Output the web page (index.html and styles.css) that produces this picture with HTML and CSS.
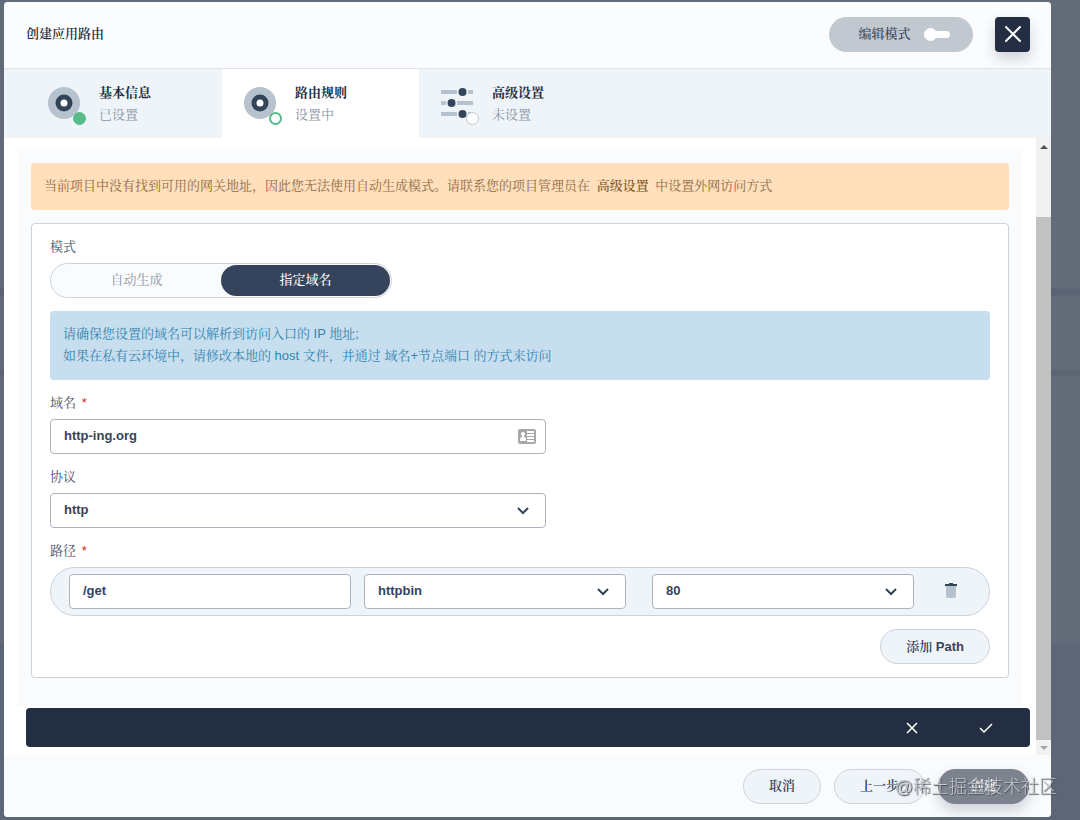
FILE: index.html
```html
<!DOCTYPE html>
<html lang="zh-CN">
<head>
  <meta charset="UTF-8">
  <title>创建应用路由</title>
  <link rel="stylesheet" href="styles.css">
</head>
<body>
  <div class="modal">
    <header class="modal-header">
      <h2>创建应用路由</h2>
      <button class="mode-switch">编辑模式
        <span class="toggle"></span>
      </button>
      <button class="btn-close" aria-label="关闭">
        <svg width="18" height="18" viewBox="0 0 18 18"><path d="M2 2l14 14M16 2L2 16" stroke="#fff" stroke-width="2" stroke-linecap="round"/></svg>
      </button>
    </header>

    <nav class="steps">
      <div class="step">
        <div class="step-icon">
          <svg width="33" height="33" viewBox="0 0 33 33"><circle cx="16" cy="16" r="16" fill="#b6c2cd"/><circle cx="16" cy="16" r="6" fill="#fff" stroke="#324558" stroke-width="5"/></svg>
          <span class="dot done"></span>
        </div>
        <div>
          <div class="step-title">基本信息</div>
          <div class="step-state">已设置</div>
        </div>
      </div>
      <div class="step active">
        <div class="step-icon">
          <svg width="33" height="33" viewBox="0 0 33 33"><circle cx="16" cy="16" r="16" fill="#b6c2cd"/><circle cx="16" cy="16" r="6" fill="#fff" stroke="#324558" stroke-width="5"/></svg>
          <span class="dot doing"></span>
        </div>
        <div>
          <div class="step-title">路由规则</div>
          <div class="step-state">设置中</div>
        </div>
      </div>
      <div class="step">
        <div class="step-icon">
          <svg width="33" height="33" viewBox="0 0 33 33"><path d="M0 5h16M27 5h5M0 16h5M16 16h16M0 27h16M27 27h5" stroke="#b6c2cd" stroke-width="4"/><g fill="#324558"><circle cx="21.500" cy="5" r="4"/><circle cx="10.500" cy="16" r="4"/><circle cx="21.500" cy="27" r="4"/></g></svg>
          <span class="dot"></span>
        </div>
        <div>
          <div class="step-title">高级设置</div>
          <div class="step-state">未设置</div>
        </div>
      </div>
    </nav>

    <div class="modal-body">
      <div class="scroll-content">
        <div class="panel">
          <div class="alert warning">当前项目中没有找到可用的网关地址，因此您无法使用自动生成模式。请联系您的项目管理员在 <b>高级设置</b> 中设置外网访问方式</div>

          <form class="card">
            <div class="label">模式</div>
            <div class="tabs">
              <button type="button" class="tab">自动生成</button>
              <button type="button" class="tab on">指定域名</button>
            </div>

            <div class="alert info">请确保您设置的域名可以解析到访问入口的 IP 地址;<br>如果在私有云环境中，请修改本地的 host 文件，并通过 域名+节点端口 的方式来访问</div>

            <label class="label" for="host">域名 <i>*</i></label>
            <div class="control half">
              <input type="text" id="host" value="http-ing.org">
              <svg class="card-icon" width="18" height="15" viewBox="0 0 18 15"><rect width="18" height="15" rx="2" fill="#a6a7a8"/><g fill="#fff"><circle cx="5" cy="5" r="2"/><path d="M4 6h2v2c1 0 2 1 2 2v2H2v-2c0-1 1-2 2-2z"/><path d="M9 2h7v2H9zM9 5h7v2H9zM9 8h7v2H9zM9 11h7v2H9z"/></g></svg>
            </div>

            <label class="label" for="protocol">协议</label>
            <div class="control half">
              <select id="protocol"><option>http</option><option>https</option></select>
              <svg class="arrow" width="12" height="8" viewBox="0 0 12 8"><path d="M1 1l5 5 5-5"/></svg>
            </div>

            <label class="label" for="path">路径 <i>*</i></label>
            <div class="path-row">
              <div class="control path">
                <input type="text" id="path" value="/get">
              </div>
              <div class="control service">
                <select aria-label="服务"><option>httpbin</option></select>
                <svg class="arrow" width="12" height="8" viewBox="0 0 12 8"><path d="M1 1l5 5 5-5"/></svg>
              </div>
              <div class="control port">
                <select aria-label="端口"><option>80</option></select>
                <svg class="arrow" width="12" height="8" viewBox="0 0 12 8"><path d="M1 1l5 5 5-5"/></svg>
              </div>
              <button type="button" class="btn-delete" aria-label="删除">
                <svg width="12" height="16" viewBox="0 0 12 16"><path d="M1 3h10v10q0 2-2 2H3q-2 0-2-2z" fill="#b6c2cd"/><path d="M0 1h4V0h4v1h4v2H0z" fill="#324558"/></svg>
              </button>
            </div>
            <div class="add-row">
              <button type="button" class="btn">添加 Path</button>
            </div>
          </form>
        </div>

        <div class="confirm-bar">
          <button aria-label="放弃"><svg width="12" height="12" viewBox="0 0 12 12"><path d="M1 1l10 10M11 1L1 11"/></svg></button>
          <button aria-label="确认"><svg width="14" height="12" viewBox="0 0 14 12"><path d="M1 6l4 4 8-8"/></svg></button>
        </div>
      </div>
      <div class="scrollbar">
        <span class="up"></span>
        <span class="thumb"></span>
        <span class="down"></span>
      </div>
    </div>

    <footer class="modal-footer">
      <button class="btn cancel">取消</button>
      <button class="btn prev">上一步</button>
      <button class="btn create">创建</button>
    </footer>
  </div>
  <div class="watermark">@稀土掘金技术社区</div>
</body>
</html>
```
FILE: styles.css
```css
* {
  box-sizing: border-box;
}
body {
  margin: 0;
  min-height: 100vh;
  padding: 2px 29px 3px 4px;
  display: flex;
  background: linear-gradient(#636b79 286px, #5b6373 290px, #5b6373 294px, #636b79 298px, #636b79 368px, #5b6373 373px, #636b79 378px, #636b79 640px, #5d6676 646px);
  font-family: "Liberation Sans", "Noto Serif CJK SC", "Noto Sans CJK SC", sans-serif;
  font-size: 13px;
  line-height: 22px;
  color: #36435c;
}
button, input, select {
  font: inherit;
  color: inherit;
  margin: 0;
}
button {
  border: none;
  padding: 0;
  cursor: pointer;
}
svg {
  display: block;
  fill: none;
}
.modal {
  flex: 1;
  display: flex;
  flex-direction: column;
  background-color: #fff;
  border-radius: 4px;
  overflow: hidden;
}
.modal-header {
  height: 67px;
  padding: 0 21px 2px 22px;
  display: flex;
  align-items: center;
  background-color: #fbfcfd;
  border-bottom: 1px solid #dfe4ea;
}
.modal-header h2 {
  margin: 0;
  flex: 1;
  font-size: 13px;
  font-weight: 600;
  color: #242e42;
}
.mode-switch {
  width: 144px;
  height: 35px;
  margin-right: 22px;
  padding-left: 6px;
  display: flex;
  align-items: center;
  justify-content: center;
  gap: 13px;
  border-radius: 18px;
  background-color: #c1c8d0;
  font-weight: 500;
}
.toggle {
  width: 26px;
  height: 7px;
  border-radius: 4px;
  background-color: #fff;
  position: relative;
}
.toggle::before {
  content: "";
  position: absolute;
  left: 0;
  top: -3px;
  width: 13px;
  height: 13px;
  border-radius: 50%;
  background-color: #fff;
}
.btn-close {
  width: 35px;
  height: 35px;
  display: flex;
  align-items: center;
  justify-content: center;
  border-radius: 4px;
  background-color: #242e42;
  box-shadow: 0 7px 14px rgba(36, 46, 66, 0.2);
}

/* 步骤 */
.steps {
  height: 69px;
  padding-left: 22px;
  display: flex;
  background-color: #eff4f9;
}
.step {
  width: 197px;
  padding-left: 22px;
  display: flex;
  align-items: center;
  gap: 18px;
}
.step:first-child {
  width: 196px;
}
.step.active {
  background-color: #fff;
}
.step-icon {
  position: relative;
}
.dot {
  position: absolute;
  right: -5px;
  bottom: -5px;
  width: 13px;
  height: 13px;
  border: 1px solid #c1c8d0;
  border-radius: 50%;
  background-color: #fff;
}
.dot.done {
  border-color: #55bc8a;
  background-color: #55bc8a;
}
.dot.doing {
  border: 2px solid #55bc8a;
}
.step-title {
  font-weight: bold;
  color: #242e42;
}
.step-state {
  color: #8b94a3;
}

/* 内容 */
.modal-body {
  flex: 1;
  display: flex;
}
.scroll-content {
  flex: 1;
  padding: 11px 6px 8px 13px;
  display: flex;
  flex-direction: column;
}
.panel {
  flex: 1;
  margin-right: 7px;
  padding: 14px;
  background-color: #fafbfd;
}
.alert {
  border-radius: 4px;
}
.alert.warning {
  padding: 12px 13px 13px;
  margin-bottom: 13px;
  background-color: #ffdfbc;
  color: #8f6b45;
}
.alert.warning b {
  margin: 0 3px;
  font-weight: 500;
  color: #79531f;
}
.alert.info {
  padding: 12px 13px 13px;
  margin: 13px 0 12px;
  background-color: #c7deef;
  color: #3385b0;
}
.card {
  padding: 12px 18px 13px;
  border: 1px solid #ccd3db;
  border-radius: 4px;
  background-color: #fff;
}
.label {
  display: block;
  margin-bottom: 5px;
  color: #4a5366;
}
.label i {
  margin-left: 2px;
  font-style: normal;
  color: #ca2621;
}
.tabs {
  width: 342px;
  height: 35px;
  padding: 1px;
  display: flex;
  border: 1px solid #ccd3db;
  border-radius: 18px;
  background-color: #f9fbfd;
}
.tab {
  flex: 1;
  padding-bottom: 2px;
  border-radius: 16px;
  background-color: transparent;
  color: #8b94a3;
}
.tab.on {
  background-color: #36435c;
  color: #fff;
  font-weight: 500;
}
.control {
  position: relative;
}
.half {
  width: calc(53% - 2px);
  margin-bottom: 12px;
}
.control input, .control select {
  display: block;
  width: 100%;
  height: 35px;
  padding: 0 13px 2px;
  border: 1px solid #abb4be;
  border-radius: 4px;
  background-color: #fff;
  font-weight: bold;
  appearance: none;
}
.card-icon {
  position: absolute;
  right: 10px;
  top: 10px;
}
.arrow {
  position: absolute;
  right: 17px;
  top: 14px;
  stroke: #324558;
  stroke-width: 2;
}
.path-row {
  height: 49px;
  padding-left: 18px;
  display: flex;
  align-items: center;
  border: 1px solid #ccd3db;
  border-radius: 25px;
  background-color: #eff4f9;
}
.path {
  flex: 282;
  margin-right: 13px;
}
.service {
  flex: 262;
  margin-right: 26px;
}
.port {
  flex: 262;
}
.btn-delete {
  width: 75px;
  height: 35px;
  padding: 0 2px 2px 0;
  display: flex;
  align-items: center;
  justify-content: center;
  background: none;
}
.add-row {
  margin-top: 13px;
  display: flex;
  justify-content: flex-end;
}
.btn {
  height: 35px;
  padding: 0 25px;
  border: 1px solid #ccd3db;
  border-radius: 18px;
  background-color: #eff4f9;
  font-weight: 600;
}
.confirm-bar {
  height: 39px;
  margin: 2px 0 0 9px;
  padding-right: 37px;
  display: flex;
  align-items: center;
  justify-content: flex-end;
  gap: 61px;
  border-radius: 4px;
  background-color: #242e42;
}
.confirm-bar button {
  background: none;
}
.confirm-bar path {
  stroke: #fff;
  stroke-width: 1.5;
}

/* 滚动条 */
.scrollbar {
  width: 15px;
  display: flex;
  flex-direction: column;
  align-items: center;
  background-color: #f1f1f1;
}
.scrollbar .up {
  margin: 7px 0 68px;
  border: 4px solid transparent;
  border-top: none;
  border-bottom-color: #505050;
}
.scrollbar .thumb {
  flex: 1;
  width: 100%;
  background-color: #c1c1c1;
}
.scrollbar .down {
  margin: 6px 0 5px;
  border: 4px solid transparent;
  border-bottom: none;
  border-top-color: #a3a3a3;
}

.modal-footer {
  height: 62px;
  padding-right: 22px;
  display: flex;
  align-items: center;
  justify-content: flex-end;
  gap: 13px;
  background-color: #fafbfd;
}
.btn.create {
  width: 91px;
  border: none;
  background-color: #7c828e;
  color: #fff;
  box-shadow: 0 7px 14px rgba(36, 46, 66, 0.2);
}
.watermark {
  position: fixed;
  right: 23px;
  bottom: 20px;
  font-family: "Liberation Sans", "Noto Sans CJK SC", sans-serif;
  font-size: 18px;
  font-weight: 300;
  line-height: 26px;
  color: #c3c6cb;
  text-shadow: 1px 1px 1px #4a4e57;
}
```
